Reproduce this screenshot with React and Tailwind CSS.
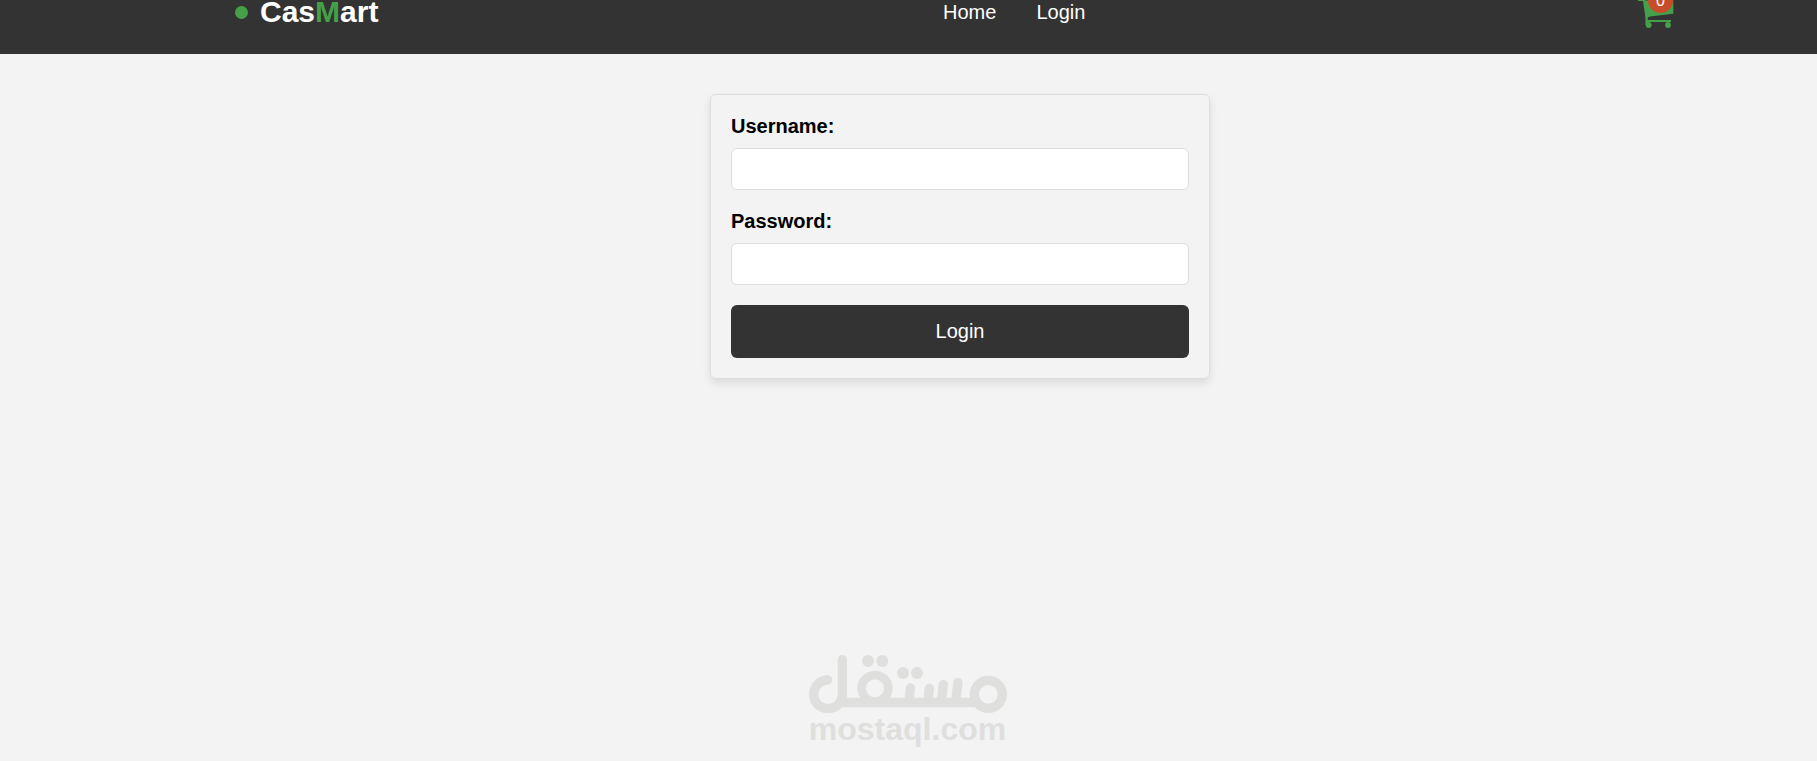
import React, { useState } from 'react';

function CartIcon() {
  return (
    <svg viewBox="0 0 36 32" className="w-9 h-8 overflow-visible" fill="#45a049" aria-hidden="true">
      <path d="M0 2.5h6.5l1 2h27.8v13.2L12 20.5l-2.2 1V24H33v2H9.8v3H7.4v-8L5 5H0z" />
      <circle cx="10.7" cy="29" r="2.9" />
      <circle cx="30" cy="29" r="2.9" />
    </svg>
  );
}

function Header({ cartCount }) {
  return (
    <header className="h-[54px] bg-[#333] text-white">
      <div className="h-6 pl-[235px] pr-[143px] flex items-center justify-between">
        <a href="#" className="flex items-center gap-3 text-[30px] leading-6 font-bold">
          <span className="size-[13px] rounded-full bg-[#45a049]" />
          <span>Cas<span className="text-[#45a049]">M</span>art</span>
        </a>
        <nav className="pl-3 flex gap-10 text-xl leading-6">
          <a href="#home">Home</a>
          <a href="#login">Login</a>
        </nav>
        <button type="button" aria-label="Cart" className="relative w-9 h-8 shrink-0">
          <CartIcon />
          <span className="absolute left-[10px] -top-2 size-[25px] rounded-full bg-[#c84b2a] text-base flex items-center justify-center">
            {cartCount}
          </span>
        </button>
      </div>
    </header>
  );
}

function Field({ id, label, type, value, onChange }) {
  return (
    <div className="mb-5">
      <label htmlFor={id} className="block mb-[10px] text-xl leading-[23px] font-bold">{label}</label>
      <input
        id={id}
        type={type}
        value={value}
        onChange={e => onChange(e.target.value)}
        className="block w-full h-[42px] px-[10px] text-base bg-white border border-[#ddd] rounded-[6px]"
      />
    </div>
  );
}

function LoginForm() {
  const [username, setUsername] = useState("");
  const [password, setPassword] = useState("");

  return (
    <form
      onSubmit={e => e.preventDefault()}
      className="w-full max-w-[500px] p-5 border border-[#ddd] rounded-[6px] shadow-[0_4px_8px_rgba(0,0,0,0.1)]"
    >
      <Field id="username" label="Username:" type="text" value={username} onChange={setUsername} />
      <Field id="password" label="Password:" type="password" value={password} onChange={setPassword} />
      <button type="submit" className="block w-full py-[15px] bg-[#333] text-white text-xl leading-[23px] rounded-[6px]">
        Login
      </button>
    </form>
  );
}

function Watermark() {
  return (
    <div className="absolute bottom-4 inset-x-0 pr-[2px] flex flex-col items-center text-[#dfdfde] pointer-events-none">
      <svg viewBox="42 30 594 174" className="w-[198px] h-[58px]" fill="none" stroke="currentColor" strokeWidth="28" strokeLinecap="round" aria-hidden="true">
        <path d="M98 105A43 43 0 1 0 142 148V44" />
        <path d="M138 172.5H545" strokeLinecap="butt" />
        <circle cx="240" cy="130" r="40" strokeWidth="26" />
        <circle cx="580" cy="148" r="42" />
        <path d="M346 129L342 168M403 130L399 168M445 119L439 168M489 112L482 168" />
        <g fill="currentColor" stroke="none">
          <circle cx="219" cy="48" r="18" />
          <circle cx="262" cy="48" r="18" />
          <circle cx="324" cy="84" r="18" />
          <circle cx="366" cy="84" r="18" />
        </g>
      </svg>
      <span className="text-[32px] leading-8 font-bold">mostaql.com</span>
    </div>
  );
}

export default function App() {
  return (
    <div className="relative min-h-screen bg-[#f3f3f3] text-black font-['Liberation_Sans',Arial,sans-serif]">
      <Header cartCount={0} />
      <main className="pt-10 pl-[103px] flex justify-center">
        <LoginForm />
      </main>
      <Watermark />
    </div>
  );
}
